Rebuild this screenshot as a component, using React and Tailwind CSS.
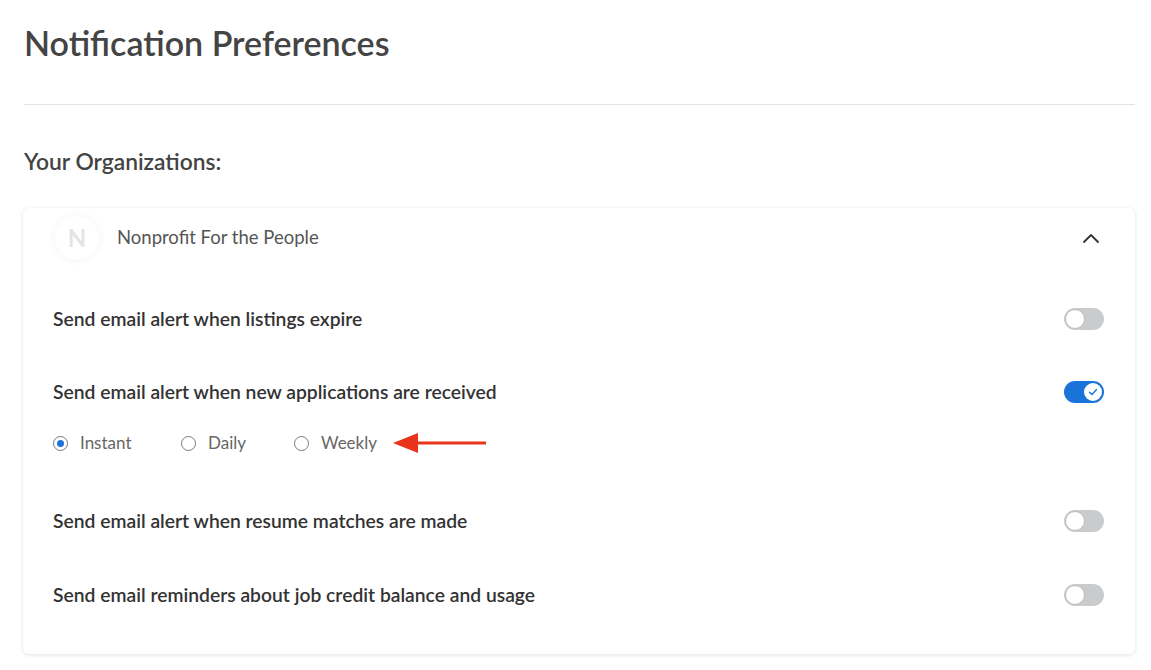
import React from "react";

function Toggle({ on }) {
  if (on) {
    return (
      <div className="relative w-[40px] h-[22px] rounded-full bg-[#1a73d9]">
        <div className="absolute right-[2px] top-[2px] w-[18px] h-[18px] rounded-full bg-white flex items-center justify-center">
          <svg width="10" height="10" viewBox="0 0 10 10" fill="none">
            <path d="M1.5 5.2 L4 7.5 L8.5 2.5" stroke="#1a73d9" strokeWidth="1.4" strokeLinecap="round" strokeLinejoin="round" />
          </svg>
        </div>
      </div>
    );
  }
  return (
    <div className="relative w-[40px] h-[22px] rounded-full bg-[#c9cbcd]">
      <div className="absolute left-[1px] top-[1px] w-[20px] h-[20px] rounded-full bg-white border border-[#b9bbbd]"></div>
    </div>
  );
}

function Radio({ checked, label, className }) {
  return (
    <div className={"flex items-center " + (className || "")}>
      <div
        className={
          "w-[15px] h-[15px] rounded-full border flex items-center justify-center " +
          (checked ? "border-[#6d7a8a]" : "border-[#7a7a7a]")
        }
      >
        {checked && <div className="w-[7px] h-[7px] rounded-full bg-[#1a73d9]"></div>}
      </div>
      <span className="ml-[12px] text-[17px] text-[#666]">{label}</span>
    </div>
  );
}

function Row({ label, on, className }) {
  return (
    <div className={"flex items-center justify-between h-[24px] pl-[30px] pr-[31px] " + (className || "")}>
      <span className="text-[19.3px] font-semibold text-[#333]">{label}</span>
      <Toggle on={on} />
    </div>
  );
}

export default function App() {
  return (
    <div className="w-[1151px] h-[670px] bg-white overflow-hidden" style={{ fontFamily: "Lato, 'Noto Sans', sans-serif" }}>
      <div className="ml-[24px] w-[1111px]">
        <div className="h-[86px] flex items-center">
          <h1 className="text-[34px] font-semibold text-[#444] leading-none">Notification Preferences</h1>
        </div>
        <div className="h-px bg-[#e3e3e3] mt-[18px]"></div>
        <div className="h-[103px] flex items-center pt-[10px]">
          <h2 className="text-[22.8px] font-semibold text-[#444]">Your Organizations:</h2>
        </div>
      </div>
      <div className="ml-[23px] w-[1112px] rounded-[6px] bg-white shadow-[0_1px_4px_rgba(0,0,0,0.12)] pt-[8px] pb-[47px]">
        <div className="h-[44px] flex items-center justify-between pl-[32px] pr-[35px]">
          <div className="flex items-center">
            <div className="w-[44px] h-[44px] rounded-full bg-white shadow-[0_0_8px_rgba(0,0,0,0.05)] flex items-center justify-center">
              <span className="text-[24px] font-bold text-[#e4e4e4]">N</span>
            </div>
            <span className="ml-[18px] text-[18.5px] text-[#555]">Nonprofit For the People</span>
          </div>
          <svg width="18" height="10" viewBox="0 0 18 10" fill="none">
            <path d="M2 9 L9 2 L16 9" stroke="#333" strokeWidth="1.8" strokeLinecap="round" strokeLinejoin="round" />
          </svg>
        </div>
        <Row className="mt-[47px]" label="Send email alert when listings expire" on={false} />
        <Row className="mt-[49px]" label="Send email alert when new applications are received" on={true} />
        <div className="mt-[27px] h-[24px] flex items-center pl-[30px]">
          <Radio checked label="Instant" className="w-[128px]" />
          <Radio label="Daily" className="w-[113px]" />
          <Radio label="Weekly" className="w-[98px]" />
          <svg width="96" height="22" viewBox="0 0 96 22">
            <path d="M94 9.5 L26 9.5 L26 12.5 L94 12.5 Z" fill="#e8341c" />
            <path d="M1 11 L26 1 L26 21 Z" fill="#e8341c" />
          </svg>
        </div>
        <Row className="mt-[54px]" label="Send email alert when resume matches are made" on={false} />
        <Row className="mt-[50px]" label="Send email reminders about job credit balance and usage" on={false} />
      </div>
    </div>
  );
}
